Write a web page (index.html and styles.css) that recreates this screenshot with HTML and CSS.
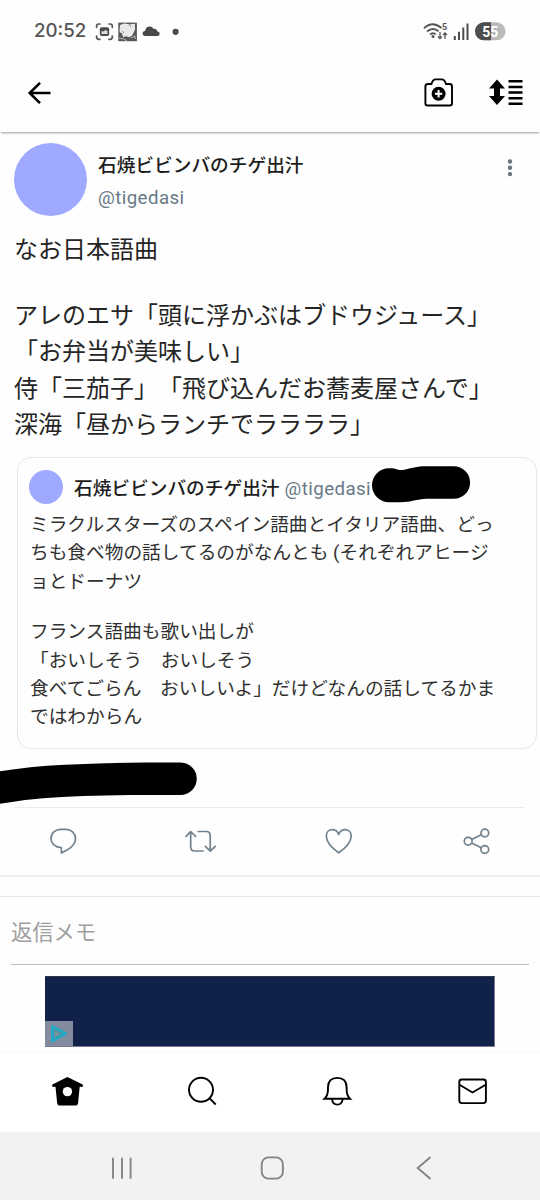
FILE: index.html
```html
<!DOCTYPE html>
<html lang="ja">
<head>
<meta charset="utf-8">
<title>石焼ビビンバのチゲ出汁</title>
<link rel="stylesheet" href="styles.css">
</head>
<body>
<div class="screen">
  <div class="status">
    <span class="clock">20:52</span>
    <svg class="status-left" width="90" height="22" viewBox="94 20 90 22">
      <g fill="none" stroke="#555" stroke-width="1.7" stroke-linecap="round"><path d="M96.6 27.3v-1q0-2.3 2.3-2.3h1M109 24h1q2.3 0 2.3 2.3v1M112.3 36v1q0 2.3-2.3 2.3h-1M100 39.3h-1q-2.4 0-2.4-2.3v-1"/></g>
      <rect x="99.8" y="27.3" width="9.4" height="8.8" rx="2" fill="#4b4b4b"/><path d="M101.5 34v-3l2 .5 2-1.5 2 1v3z" fill="#ddd"/>
      <rect x="118.3" y="22.6" width="18.6" height="18.6" fill="#565656"/>
      <path d="M120 25l4-1.5 6 .8 5-.5v6l-3 6-3 1.5-3-1-3 1-1-4-2.5-1z" fill="#e9e9e9"/>
      <path d="M122 31l2 2M129 24l2 3" stroke="#888" stroke-width="1"/>
      <path d="M119 38l5 1 3 2M131 38l4-2v3" stroke="#bbb" stroke-width="1" fill="none"/>
      <path d="M145 36q-2.500-.3-2.500-2.400 0-2.200 2.600-2.800.8-4.300 4.700-4.300 2.500 0 3.900 2.400 3.100-.3 3.500 2.400 2.500.3 2.500 2.500 0 2.200-2.500 2.200z" fill="#484848"/>
      <circle cx="175.600" cy="31.800" r="3.100" fill="#4b4b4b"/>
    </svg>
    <svg class="status-right" width="86" height="22" viewBox="422 20 86 22">
      <g fill="none" stroke="#555" stroke-width="1.900"><path d="M424 28.200q8.500-8 17.500-.2M427 31.500q5.800-5 11.600-.2M430 34.400q3-2.500 5.800 0"/></g>
      <circle cx="433" cy="36.500" r="1.500" fill="#555"/>
      <path d="M440 32v6.500m-2-2l2 2 2-2M445 39v-6m-2 2l2-2 2 2" fill="none" stroke="#555" stroke-width="1.300"/>
      <text class="wifi-gen" x="442" y="30.300">5</text>
      <path d="M454.800 40v-4M459 40v-8.200M463.300 40V27.500M467.500 40V23.500" stroke="#4b4b4b" stroke-width="2"/>
      <rect x="475" y="22.300" width="30.500" height="18" rx="9" fill="#bababa"/>
      <path d="M491 22.300h-7a9 9 0 0 0 0 18h7z" fill="#4d4d4d"/>
      <text class="battery" x="490.300" y="36.600">55</text>
    </svg>
  </div>

  <header class="topbar">
    <svg width="24" height="24" viewBox="27 80.500 24 24"><path d="M50.500 92.500H30M40 82.300L29.700 92.500 40 102.700" fill="none" stroke="#000" stroke-width="2.600"/></svg>
    <div class="tools">
      <svg width="30" height="30" viewBox="424 78 30 30"><path d="M427.800 84h3.600q1.400-4.600 4.300-4.600h6q2.900 0 4.300 4.600h3.600q2.400 0 2.400 2.500v16.700q0 2.300-2.400 2.300h-21.800q-2.400 0-2.400-2.300V86.500q0-2.500 2.400-2.500z" fill="none" stroke="#000" stroke-width="1.900"/><circle cx="438.600" cy="93.700" r="7" fill="#000"/><path d="M438.600 90v7.400M434.900 93.700h7.400" stroke="#fff" stroke-width="2"/></svg>
      <svg width="36" height="28" viewBox="488.500 79 36 28"><path d="M497.500 79.500l8 9h-5v7.500h5l-8 9-8-9h5v-7.500h-5z"/><path d="M509 81.300h14M509 87h14M509 92.500h14M509 98.200h14M509 103.700h14" stroke="#000" stroke-width="2.600"/></svg>
    </div>
  </header>

  <main class="content">
    <article class="tweet">
      <div class="author">
        <div class="avatar"></div>
        <div class="who"><div class="name">石焼ビビンバのチゲ出汁</div><div class="handle">@tigedasi</div></div>
        <svg class="more" width="6" height="20" viewBox="0 0 6 20" fill="#66757f"><circle cx="3" cy="3.500" r="2.200"/><circle cx="3" cy="9.800" r="2.200"/><circle cx="3" cy="16.100" r="2.200"/></svg>
      </div>
      <div class="body">
        <p>なお日本語曲</p>
        <p class="gap"></p>
        <p>アレのエサ「頭に浮かぶはブドウジュース」</p>
        <p>「お弁当が美味しい」</p>
        <p>侍「三茄子」「飛び込んだお蕎麦屋さんで」</p>
        <p>深海「昼からランチでララララ」</p>
      </div>
      <section class="quote">
        <div class="quote-head">
          <div class="avatar small"></div>
          <span class="name">石焼ビビンバのチゲ出汁</span>
          <span class="handle">@tigedasi</span>
          <svg class="marker-date" width="100" height="40" viewBox="371 464 100 40"><path d="M389 468.300C396 467.500 397 471 404 469.800 411 468 417 466.200 426 466.200H453.800A16.300 16.300 0 0 1 453.800 498.800H427C416 499 412 502.300 400 502.300H389A17 17 0 0 1 389 468.300z"/></svg>
        </div>
        <div class="quote-body">
          <p>ミラクルスターズのスペイン語曲とイタリア語曲、どっ</p>
          <p>ちも食べ物の話してるのがなんとも (それぞれアヒージ</p>
          <p>ョとドーナツ</p>
          <p class="gap"></p>
          <p>フランス語曲も歌い出しが</p>
          <p>「おいしそう　おいしそう</p>
          <p>食べてごらん　おいしいよ」だけどなんの話してるかま</p>
          <p>ではわからん</p>
        </div>
      </section>
      <div class="meta"><svg class="marker-meta" width="200" height="46" viewBox="0 760 200 46"><path d="M0 771.300Q28 766.500 65 764.700 105 762.700 145 762.500H180.500A16.200 16.200 0 0 1 180.500 795H130Q80 795.500 43 798.300 22 799.800 0 803.700z"/></svg></div>
      <div class="actions">
        <svg width="32" height="32" viewBox="47 825 32 32"><path d="M61.300 847.500C55 847.500 51 843.500 51 838.800 51 832.800 55.500 829.300 60.500 829.300H66C71.500 829.300 75.500 833.500 75.500 838.500 75.500 846 68 849.500 61.500 853z"/></svg>
        <svg width="36" height="32" viewBox="184.300 825 36 32"><path d="M186.300 836.400L191 831.500l4.900 4.900M191 832v15q0 4 4 4h8.300M198.500 831.500h8q4 0 4 4v15.500M205.700 846.300l4.900 4.900 4.900-4.900"/></svg>
        <svg width="32" height="32" viewBox="324 825 32 32"><path d="M338.700 852.800C332 848 326.300 842 326.300 836 326.300 832 329 829.700 332.300 829.700 335.500 829.700 337.500 831.500 338.700 834.300 339.900 831.500 342 829.700 345 829.700 348.500 829.700 351.200 832 351.200 836 351.200 842 345.500 848 338.700 852.800z"/></svg>
        <svg width="32" height="32" viewBox="461 825 32 32"><circle cx="468.200" cy="841.200" r="3.900"/><circle cx="484.800" cy="833" r="3.900"/><circle cx="484.800" cy="849.500" r="3.900"/><path d="M471.700 839.400l9.600-4.700M471.700 843l9.600 4.700"/></svg>
      </div>
    </article>
    <div class="spacer"></div>
    <div class="memo">返信メモ</div>
    <div class="ad"><div class="adchoice"><svg width="18" height="20" viewBox="0 0 18 20"><path d="M2.500 2.500L15.500 9.500 2.500 17z" fill="#658d9c" stroke="#24a9c5" stroke-width="3" stroke-linejoin="round"/><path d="M6 8v4M5 10h4" stroke="#879aa8" stroke-width="1"/></svg></div></div>
  </main>

  <nav class="tabs">
    <svg width="34" height="34" viewBox="50 1074 34 34"><path d="M67.400 1077l15.300 7.500q.8 1.300-.4 2.500l-2.600-.3-1.600 16q-.3 2.900-3 2.900h-15q-2.700 0-3-2.900l-1.600-16-2.700.3q-1.200-1.200-.4-2.500z"/><circle cx="67.400" cy="1091.600" r="4.700" fill="#fff"/></svg>
    <svg width="34" height="34" viewBox="185 1074 34 34" fill="none" stroke="#000" stroke-width="1.900"><circle cx="201" cy="1089.800" r="12"/><path d="M209.700 1098.300l6 6.200"/></svg>
    <svg width="34" height="34" viewBox="320 1074 34 34" fill="none" stroke="#000" stroke-width="1.900"><path d="M324.600 1098.700Q328 1095.800 328 1089V1087Q328.300 1077.900 337.300 1077.900T346.600 1087V1089Q346.600 1095.800 350 1098.700zM332 1099q.5 5.600 5.300 5.600t5.400-5.600"/></svg>
    <svg width="34" height="34" viewBox="455 1074 34 34" fill="none" stroke="#000" stroke-width="1.900"><rect x="459.300" y="1079.500" width="26.600" height="23.600" rx="2.500"/><path d="M459.500 1084.700l13 7.800 13.200-7.800"/></svg>
  </nav>
  <div class="system">
    <svg width="26" height="26" viewBox="109 1155 26 26"><path d="M113 1158.500v19.500M122 1158.500v19.500M130.600 1158.500v19.500"/></svg>
    <svg width="26" height="26" viewBox="260 1155 26 26"><rect x="261.700" y="1157.400" width="21.200" height="21.200" rx="6.800"/></svg>
    <svg width="26" height="26" viewBox="411 1155 26 26"><path d="M430 1157.500l-12.300 10.500 12.300 10.500"/></svg>
  </div>
</div>
</body>
</html>
```
FILE: styles.css
```css
* { box-sizing: border-box; }
body { margin: 0; background: #fefefe; color: #252525; font-family: Roboto, "Noto Sans CJK JP", sans-serif; text-spacing-trim: space-all; }
p { margin: 0; }
svg { display: block; flex: none; }
.screen { width: 540px; height: 1200px; display: flex; flex-direction: column; overflow: hidden; }

.status { height: 62px; flex: none; display: flex; align-items: center; padding: 0 32px 0 34px; }
.clock { width: 60px; font: 500 18.700px/22px Inter, sans-serif; color: #555; white-space: nowrap; }
.status-right { margin-left: auto; }
.wifi-gen { font: 700 9px Roboto, sans-serif; fill: #555; }
.battery { font: 700 14px Roboto, sans-serif; fill: #fff; text-anchor: middle; }

.topbar { height: 70px; flex: none; display: flex; align-items: center; justify-content: space-between; padding: 0 16px 8px 27px; box-shadow: 0 2px 2px -1px rgba(0, 0, 0, .4); }
.tools { display: flex; align-items: center; gap: 34px; }

.content { height: 920px; flex: none; overflow: hidden; }
.author { display: flex; padding: 11px 27px 0 14px; height: 99px; }
.avatar { width: 73px; height: 73px; flex: none; border-radius: 50%; background: #9fa9ff; }
.avatar.small { width: 34px; height: 34px; margin-left: -1px; }
.who { margin-left: 11px; padding-top: 9px; }
.name { font-weight: 500; font-size: 18.700px; line-height: 28px; color: #1c1c1c; white-space: nowrap; }
.handle { font-size: 18.700px; letter-spacing: .42px; color: #687986; line-height: 28px; }
.who .handle { margin-top: 4px; }
.more { margin: 15px 0 0 auto; }
.body { padding: 1px 0 0 14px; font-size: 24px; line-height: 36.500px; white-space: nowrap; height: 226px; }
.body .gap { height: 29px; }

.quote { height: 292px; margin: 0 3px 0 17px; border: 1px solid #e1e8ed; border-radius: 14px; padding: 12px 0 0 12px; }
.quote-head { position: relative; display: flex; height: 38px; }
.quote-head .name { margin-left: 11px; padding-top: 5px; }
.quote-head .handle { margin-left: 5px; padding-top: 5px; }
.marker-date { position: absolute; left: 341px; top: -6px; }
.quote-body { padding-top: 3px; font-size: 18.700px; line-height: 28.400px; white-space: nowrap; color: #303030; }
.quote-body .gap { height: 22px; }

.meta { position: relative; height: 59px; margin: 0 15px 0 14px; border-bottom: 1px solid #e9ecee; }
.marker-meta { position: absolute; left: -14px; top: 11px; }
.actions { height: 69px; display: flex; justify-content: space-between; align-items: center; padding: 0 47px 2px; border-bottom: 2px solid #efefef; }
.actions svg { fill: none; stroke: #71828f; stroke-width: 1.700; stroke-linecap: round; stroke-linejoin: round; }
.spacer { height: 20px; border-bottom: 1px solid #e6e6e6; }
.memo { height: 68px; margin: 0 11px; padding-top: 18px; border-bottom: 1px solid #bdbdbd; font-size: 21.300px; line-height: 36px; color: #9e9e9e; }
.ad { width: 450px; height: 71px; margin: 11px 0 0 45px; background: #10224a; border: 1px solid #777a91; border-top-color: #303449; border-left: 0; display: flex; align-items: flex-end; }
.adchoice { width: 28px; height: 25px; background: #858b9e; display: flex; align-items: center; padding-left: 5px; }

.tabs { height: 80px; flex: none; background: #fff; border-top: 1px solid #f8f8f8; display: flex; justify-content: space-between; align-items: center; padding: 0 51px 4px 50px; }
.system { height: 68px; flex: none; background: #f2f2f2; display: flex; justify-content: space-between; padding: 23px 103px 0 109px; }
.system svg { fill: none; stroke: #858585; stroke-width: 1.900; stroke-linecap: round; }
```
